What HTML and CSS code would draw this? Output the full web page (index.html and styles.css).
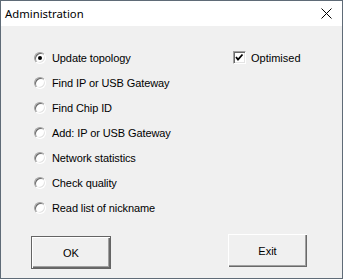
FILE: index.html
```html
<!DOCTYPE html>
<html lang="en">
<head>
    <meta charset="UTF-8">
    <title>Administration</title>
    <link rel="stylesheet" href="styles.css">
</head>
<body>
    <div class="window">
        <div class="titlebar">
            <span class="title">Administration</span>
            <svg class="close" width="11" height="11" viewBox="0 0 11 11">
                <path d="M0.5 0.5 L10.5 10.5 M10.5 0.5 L0.5 10.5" stroke="#000" stroke-width="1" fill="none"/>
            </svg>
        </div>
        <div class="content">
            <div class="options">
                <div class="radios">
                    <label class="radio-row"><span class="radio checked"></span>Update topology</label>
                    <label class="radio-row"><span class="radio"></span>Find IP or USB Gateway</label>
                    <label class="radio-row"><span class="radio"></span>Find Chip ID</label>
                    <label class="radio-row"><span class="radio"></span>Add: IP or USB Gateway</label>
                    <label class="radio-row"><span class="radio"></span>Network statistics</label>
                    <label class="radio-row"><span class="radio"></span>Check quality</label>
                    <label class="radio-row"><span class="radio"></span>Read list of nickname</label>
                </div>
                <label class="check-row">
                    <span class="checkbox">
                        <svg width="11" height="11" viewBox="0 0 11 11">
                            <polyline points="2,5 4,7.5 8.5,2.5" stroke="#000" stroke-width="1.8" fill="none"/>
                        </svg>
                    </span>
                    Optimised
                </label>
            </div>
            <div class="buttons">
                <button class="btn default">OK</button>
                <button class="btn">Exit</button>
            </div>
        </div>
    </div>
</body>
</html>
```

FILE: styles.css
```css
body {
    margin: 0;
    font-family: "Liberation Sans", Arial, sans-serif;
    font-size: 11px;
    color: #000;
}
.window {
    width: 343px;
    height: 279px;
    box-sizing: border-box;
    border: 1px solid #5f6b77;
    background-color: #f0f0f0;
    display: flex;
    flex-direction: column;
}
.titlebar {
    height: 25px;
    background-color: #fff;
    display: flex;
    align-items: center;
    justify-content: space-between;
    padding: 0 10px 0 4px;
}
.title {
    font-family: "Noto Sans", sans-serif;
    font-size: 11.3px;
}
.close {
    display: block;
}
.content {
    flex: 1;
    padding-top: 19px;
}
.options {
    display: flex;
    padding-left: 33px;
}
.radios {
    display: flex;
    flex-direction: column;
    width: 199px;
}
.radio-row {
    height: 25px;
    display: flex;
    align-items: center;
    gap: 6px;
    letter-spacing: -0.1px;
}
.radio {
    width: 12px;
    height: 12px;
    box-sizing: border-box;
    border-radius: 50%;
    background-color: #fff;
    border: 1px solid;
    border-color: #a0a0a0 #fff #fff #a0a0a0;
    box-shadow: inset 1px 1px #696969, inset -1px -1px #e3e3e3;
    display: flex;
    align-items: center;
    justify-content: center;
}
.radio.checked::after {
    content: "";
    width: 4px;
    height: 4px;
    border-radius: 50%;
    background-color: #000;
}
.check-row {
    height: 25px;
    display: flex;
    align-items: center;
    gap: 5px;
}
.checkbox {
    width: 13px;
    height: 13px;
    box-sizing: border-box;
    background-color: #fff;
    border: 1px solid;
    border-color: #a0a0a0 #fff #fff #a0a0a0;
    box-shadow: inset 1px 1px #696969, inset -1px -1px #e3e3e3;
    display: flex;
    align-items: center;
    justify-content: center;
}
.checkbox svg {
    display: block;
}
.buttons {
    display: flex;
    align-items: flex-start;
    gap: 117px;
    padding-left: 30px;
    margin-top: 14px;
}
.btn {
    width: 79px;
    height: 33px;
    padding: 0;
    font-family: "Liberation Sans", Arial, sans-serif;
    font-size: 11px;
    color: #000;
    background-color: #f0f0f0;
    border: none;
    border-radius: 0;
    box-shadow: inset 1px 1px #fff, inset -1px -1px #696969, inset -2px -2px #a0a0a0;
}
.btn.default {
    width: 80px;
    margin-top: 2px;
    border: 1px solid #646464;
    box-shadow: inset 1px 1px #fff, inset -1px -1px #696969, inset -2px -2px #a0a0a0;
}
```
